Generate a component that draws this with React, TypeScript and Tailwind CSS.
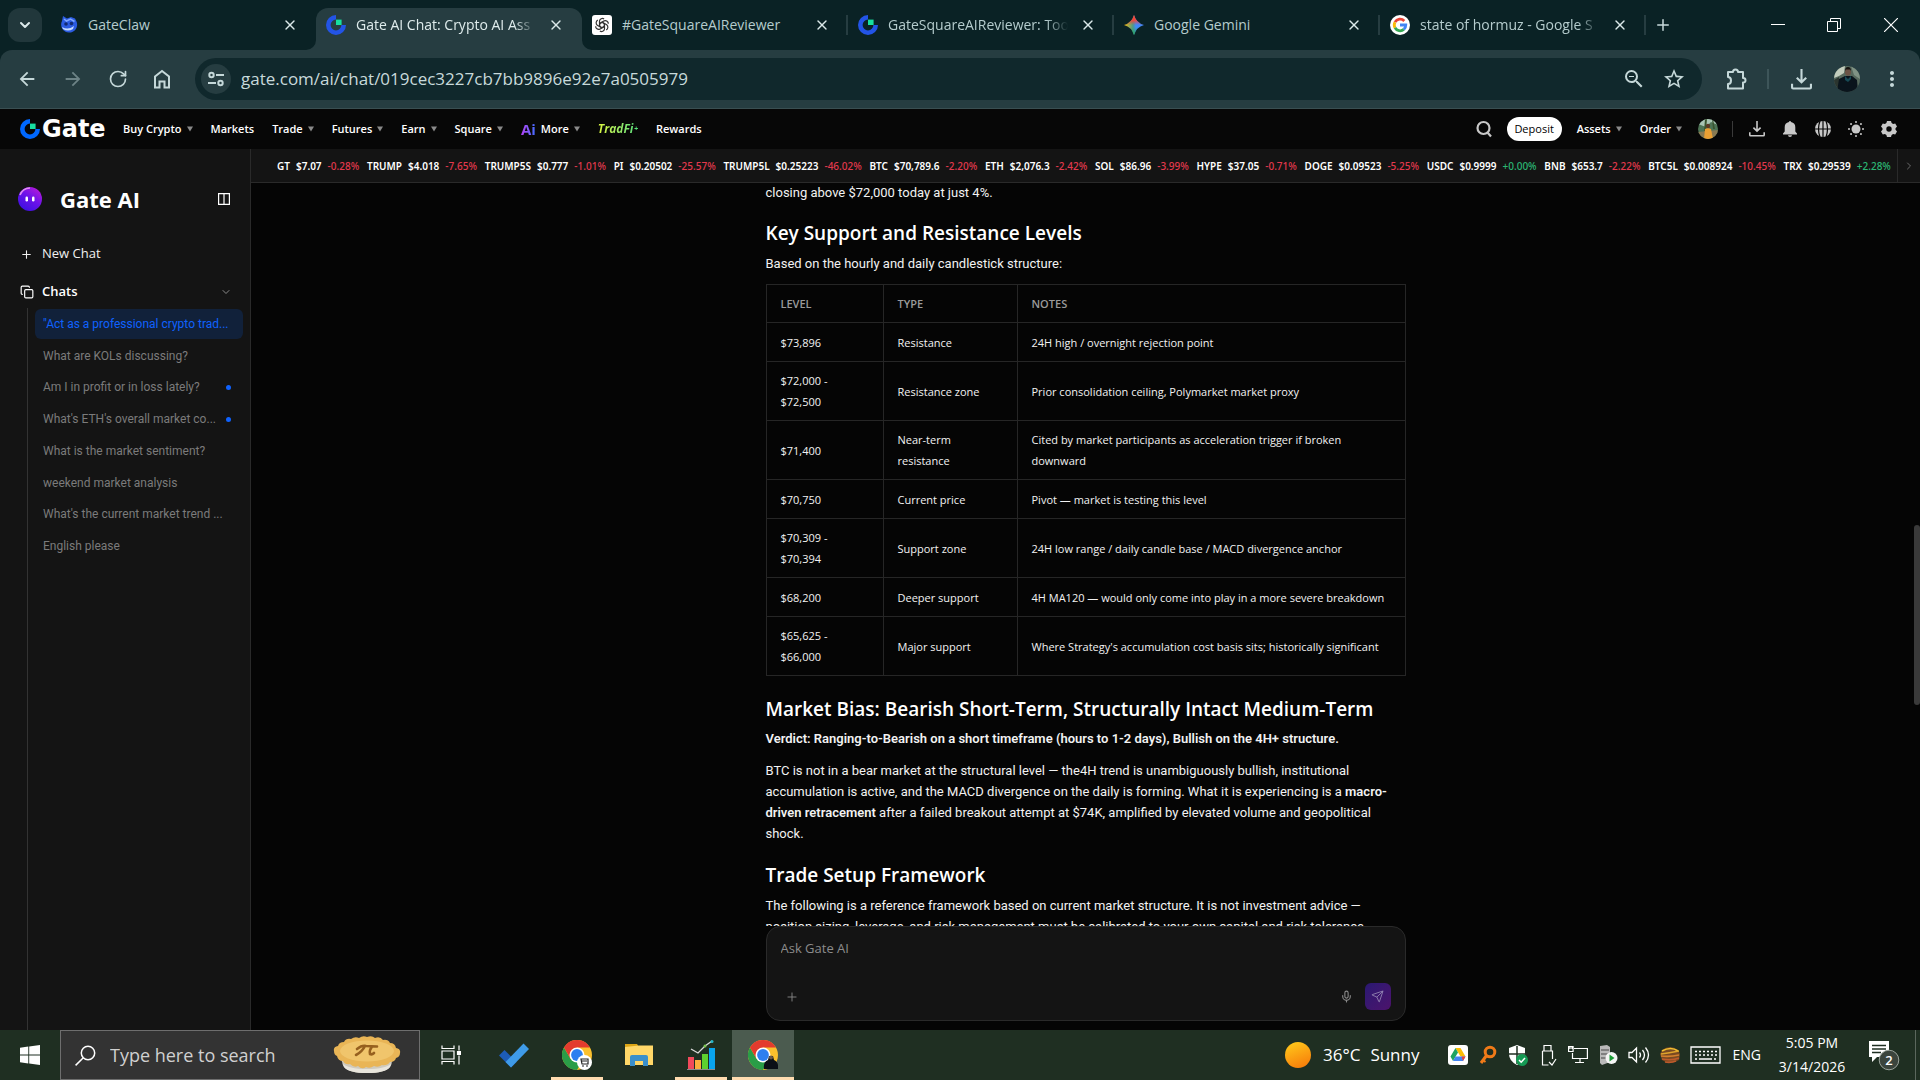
import React from 'react';
import { ChevronDown, ChevronRight, Copy, Mic, Plus, RotateCw, Send, X } from 'lucide-react';
import { MdArrowBack, MdArrowForward, MdMoreVert, MdOutlineZoomOut, MdStarBorder } from 'react-icons/md';

type Coin = { name: string; price: string; change: string };
type Level = { level: string; type: string; notes: string };

const COINS: Coin[] = [
  { name: 'GT', price: '$7.07', change: '-0.28%' },
  { name: 'TRUMP', price: '$4.018', change: '-7.65%' },
  { name: 'TRUMP5S', price: '$0.777', change: '-1.01%' },
  { name: 'PI', price: '$0.20502', change: '-25.57%' },
  { name: 'TRUMP5L', price: '$0.25223', change: '-46.02%' },
  { name: 'BTC', price: '$70,789.6', change: '-2.20%' },
  { name: 'ETH', price: '$2,076.3', change: '-2.42%' },
  { name: 'SOL', price: '$86.96', change: '-3.99%' },
  { name: 'HYPE', price: '$37.05', change: '-0.71%' },
  { name: 'DOGE', price: '$0.09523', change: '-5.25%' },
  { name: 'USDC', price: '$0.9999', change: '+0.00%' },
  { name: 'BNB', price: '$653.7', change: '-2.22%' },
  { name: 'BTC5L', price: '$0.008924', change: '-10.45%' },
  { name: 'TRX', price: '$0.29539', change: '+2.28%' },
];

const CHATS = [
  { title: '"Act as a professional crypto trad...', active: true, unread: false },
  { title: 'What are KOLs discussing?', active: false, unread: false },
  { title: 'Am I in profit or in loss lately?', active: false, unread: true },
  { title: "What's ETH's overall market co...", active: false, unread: true },
  { title: 'What is the market sentiment?', active: false, unread: false },
  { title: 'weekend market analysis', active: false, unread: false },
  { title: "What's the current market trend ...", active: false, unread: false },
  { title: 'English please', active: false, unread: false },
];

const LEVELS: Level[] = [
  { level: '$73,896', type: 'Resistance', notes: '24H high / overnight rejection point' },
  { level: '$72,000 - $72,500', type: 'Resistance zone', notes: 'Prior consolidation ceiling, Polymarket market proxy' },
  { level: '$71,400', type: 'Near-term resistance', notes: 'Cited by market participants as acceleration trigger if broken downward' },
  { level: '$70,750', type: 'Current price', notes: 'Pivot — market is testing this level' },
  { level: '$70,309 - $70,394', type: 'Support zone', notes: '24H low range / daily candle base / MACD divergence anchor' },
  { level: '$68,200', type: 'Deeper support', notes: '4H MA120 — would only come into play in a more severe breakdown' },
  { level: '$65,625 - $66,000', type: 'Major support', notes: "Where Strategy's accumulation cost basis sits; historically significant" },
];

const GateMark = ({ size = 20, blue = '#2354e6' }: { size?: number; blue?: string }) => (
  <svg width={size} height={size} viewBox="0 0 20 20" className="shrink-0">
    <path d="M10 0a10 10 0 1 0 10 10h-4.6A5.4 5.4 0 1 1 10 4.6z" fill={blue} />
    <path d="M10 4.6h5.6V10H10z" fill="#17dfa0" />
  </svg>
);

const ClawIcon = () => (
  <svg width="18" height="18" viewBox="0 0 18 18" className="shrink-0">
    <path d="M3 0l4 2.500 4-1.500 4 1.500 1.500 3A8 8 0 1 1 2 5z" fill="#2b5be0" />
    <path d="M4 3l2.500 2 4-2 4 2.500" stroke="#7ea6ff" fill="none" strokeWidth="1.500" />
    <circle cx="6" cy="8" r="1.800" fill="#122a70" />
    <circle cx="11.500" cy="7.500" r="1.800" fill="#122a70" />
    <path d="M2 11q6 3.500 12-1l-1 3q-5 3-10 0z" fill="#c5dbff" />
  </svg>
);

const OpenAiIcon = () => (
  <svg width="20" height="20" viewBox="0 0 20 20" className="shrink-0">
    <rect width="20" height="20" rx="3" fill="#fff" />
    <g fill="none" stroke="#333" strokeWidth="1.2">
      {[0, 60, 120, 180, 240, 300].map((a) => (
        <path key={a} d="M10 7.3l2.5 1.5v5.2a3 3 0 0 1-4.6 2.1" transform={`rotate(${a} 10 10)`} />
      ))}
    </g>
  </svg>
);

const GEM_PATH = 'M10 0Q12.200 7.800 20 10 12.200 12.200 10 20 7.800 12.200 0 10 7.800 7.800 10 0z';

const GeminiIcon = () => (
  <svg width="20" height="20" viewBox="0 0 20 20" className="shrink-0">
    <defs>
      <linearGradient id="gem" x1="0" y1="0.5" x2="1" y2="0.5">
        <stop offset="0" stopColor="#fbbc05" />
        <stop offset="0.45" stopColor="#4c9a8b" />
        <stop offset="0.6" stopColor="#3f8bfd" />
        <stop offset="1" stopColor="#4285f4" />
      </linearGradient>
      <linearGradient id="gemTop" x1="0.5" y1="0" x2="0.5" y2="1">
        <stop offset="0" stopColor="#f3453a" />
        <stop offset="0.25" stopColor="#f3453a" />
        <stop offset="0.5" stopColor="#f3453a" stopOpacity="0" />
        <stop offset="0.6" stopColor="#25a85a" stopOpacity="0" />
        <stop offset="1" stopColor="#25a85a" />
      </linearGradient>
    </defs>
    <path d={GEM_PATH} fill="url(#gem)" />
    <path d={GEM_PATH} fill="url(#gemTop)" />
  </svg>
);

const GoogleIcon = () => (
  <svg width="20" height="20" viewBox="0 0 20 20" className="shrink-0">
    <circle cx="10" cy="10" r="10" fill="#fff" />
    <g fill="none" strokeWidth="2.8">
      <path d="M14.3 6A5.8 5.8 0 0 0 5 7.2" stroke="#ea4335" />
      <path d="M5 7.2a5.8 5.8 0 0 0 0 5.6" stroke="#fbbc05" />
      <path d="M5 12.8a5.8 5.8 0 0 0 8.8 1.6" stroke="#34a853" />
      <path d="M13.8 14.4A5.8 5.8 0 0 0 15.8 10H10" stroke="#4285f4" />
    </g>
  </svg>
);

const TABS: { title: string; icon: React.ReactNode; active?: boolean; line?: boolean; fade?: boolean }[] = [
  { title: 'GateClaw', icon: <ClawIcon /> },
  { title: 'Gate AI Chat: Crypto AI Ass', icon: <GateMark />, active: true, fade: true },
  { title: '#GateSquareAIReviewer', icon: <OpenAiIcon />, line: true },
  { title: 'GateSquareAIReviewer: Too', icon: <GateMark />, line: true, fade: true },
  { title: 'Google Gemini', icon: <GeminiIcon />, line: true },
  { title: 'state of hormuz - Google S', icon: <GoogleIcon />, line: true, fade: true },
];

const DownloadTray = ({ size }: { size: number }) => (
  <svg width={size} height={size} viewBox="0 0 20 20" fill="none" stroke="currentColor" strokeWidth="2">
    <path d="M10 0v12.500M5.5 8.300L10 12.700l4.5-4.4M1 14v3.500q0 1 1 1h16q1 0 1-1V14" />
  </svg>
);

const TabStrip = () => (
  <div className="flex h-[50px] shrink-0 items-center bg-[#0a2225] pl-2">
    <button aria-label="Search tabs" className="flex h-[34px] w-[34px] shrink-0 items-center justify-center rounded-xl bg-[#21373b] text-[#dbe9ea]">
      <ChevronDown size={16} strokeWidth={3} />
    </button>
    <div className="ml-2 flex min-w-0 flex-1 items-end self-stretch">
      {TABS.map((tab) => (
        <div
          key={tab.title}
          className={`relative flex h-[42px] w-[266px] shrink items-center pb-2 pl-[10px] pr-[18px] ${
            tab.active ? 'rounded-t-xl bg-[#263d41] text-[#dfecec]' : 'text-[#b5cccd]'
          }`}
        >
          {tab.active && (
            <>
              <svg width="10" height="10" className="absolute -left-[10px] bottom-0">
                <path d="M10 0v10H0A10 10 0 0 0 10 0z" fill="#263d41" />
              </svg>
              <svg width="10" height="10" className="absolute -right-[10px] bottom-0">
                <path d="M0 0v10h10A10 10 0 0 1 0 0z" fill="#263d41" />
              </svg>
            </>
          )}
          {tab.icon}
          <span
            className={`ml-[10px] min-w-0 flex-1 overflow-hidden whitespace-nowrap text-sm leading-5 ${
              tab.fade ? '[mask-image:linear-gradient(to_right,#000_88%,transparent)]' : ''
            }`}
          >
            {tab.title}
          </span>
          <button aria-label={`Close ${tab.title}`} className="ml-3 shrink-0 text-[#dbe9ea]">
            <X size={16} strokeWidth={2} />
          </button>
          {tab.line && <span className="absolute right-0 top-[7px] h-5 w-[2px] bg-[#263d41]" />}
        </div>
      ))}
      <button aria-label="New tab" className="mb-4 ml-2 text-[#c8dadb]">
        <Plus size={18} />
      </button>
    </div>
    <div className="flex shrink-0 items-center text-white">
      <button aria-label="Minimize" className="flex h-10 w-14 items-center justify-center">
        <svg width="14" height="14" viewBox="0 0 14 14" stroke="currentColor">
          <path d="M0 6.500h14" />
        </svg>
      </button>
      <button aria-label="Restore" className="flex h-10 w-14 items-center justify-center">
        <svg width="14" height="14" viewBox="0 0 14 14" fill="none" stroke="currentColor">
          <path d="M.5 3.5h10v10H.5zM3.5 3.5v-3h10v10h-3" />
        </svg>
      </button>
      <button aria-label="Close window" className="flex h-10 w-[58px] items-center justify-center">
        <svg width="14" height="14" viewBox="0 0 14 14" stroke="currentColor" strokeWidth="1.2">
          <path d="M0 0l14 14M14 0L0 14" />
        </svg>
      </button>
    </div>
  </div>
);

const Toolbar = () => (
  <div className="bg-[#0a2225]">
    <div className="flex h-[59px] shrink-0 items-center rounded-t-xl border-b border-[#3a4f52] bg-[#263d41] pl-4 pr-4 text-[#c5d8d9]">
      <div className="flex items-center gap-6">
        <button aria-label="Back"><MdArrowBack size={22} /></button>
        <button aria-label="Forward" className="text-[#6d8386]"><MdArrowForward size={22} /></button>
        <button aria-label="Reload"><RotateCw size={20} strokeWidth={2} /></button>
        <button aria-label="Home">
          <svg width="20" height="20" viewBox="0 0 20 20" fill="none" stroke="currentColor" strokeWidth="2">
            <path d="M3 7.500L10 2l7 5.500V18.500h-4.500v-6h-5v6H3z" />
          </svg>
        </button>
      </div>
      <div className="ml-[23px] flex h-[42px] flex-1 items-center rounded-full bg-[#10282c] pl-[6px] pr-4">
        <button aria-label="Site information" className="flex h-[30px] w-[30px] items-center justify-center rounded-full bg-[#263d41]">
          <svg width="16" height="16" viewBox="0 0 16 16" fill="none" stroke="currentColor" strokeWidth="2">
            <circle cx="3.5" cy="4" r="2.2" />
            <path d="M8 4h8M0 12h8" />
            <circle cx="12.5" cy="12" r="2.2" />
          </svg>
        </button>
        <input
          aria-label="Address and search bar"
          defaultValue="gate.com/ai/chat/019cec3227cb7bb9896e92e7a0505979"
          className="ml-[10px] min-w-0 flex-1 bg-transparent text-[17px] text-[#c8dadb] outline-none"
        />
        <button aria-label="Zoom"><MdOutlineZoomOut size={24} /></button>
        <button aria-label="Bookmark" className="ml-4"><MdStarBorder size={24} /></button>
      </div>
      <button aria-label="Extensions" className="ml-6">
        <svg width="21" height="22" viewBox="0 0 21 22" fill="none" stroke="currentColor" strokeWidth="2" strokeLinejoin="round">
          <path d="M2 4h5q0-2.500 2.500-2.500T12 4h5v6q2.500 0 2.500 2.300T17 14.500V20.500H2V16q3 0 3-3.500T2 9z" />
        </svg>
      </button>
      <span className="ml-5 h-5 w-[2px] bg-[#3d5559]" />
      <button aria-label="Downloads" className="ml-[22px]"><DownloadTray size={21} /></button>
      <button aria-label="Profile" className="ml-[22px]">
        <svg width="26" height="26" viewBox="0 0 26 26">
          <defs><clipPath id="pf"><circle cx="13" cy="13" r="13" /></clipPath></defs>
          <g clipPath="url(#pf)">
            <rect width="26" height="26" fill="#56695d" />
            <path d="M0 0h11l-1 7-5 3-5 2z" fill="#c3cdbd" />
            <path d="M17 0h9v13l-6-4z" fill="#7f9284" />
            <path d="M0 14l5-3v15H0z" fill="#2b352f" />
            <path d="M3 26l2-13 6-3h7l5 4 1 12z" fill="#0a141c" />
            <path d="M11 10l3 3 3-3v3l-3 3-3-2z" fill="#174a55" />
            <ellipse cx="14" cy="6" rx="3" ry="3.800" fill="#6b5346" />
            <path d="M11 5q0-4 3-4t3 4l-1-1.500h-4z" fill="#17130f" />
          </g>
        </svg>
      </button>
      <button aria-label="Chrome menu" className="ml-5"><MdMoreVert size={24} /></button>
    </div>
  </div>
);

const Caret = () => (
  <svg width="6" height="6" viewBox="0 0 6 6" className="ml-[5px] fill-[#8a8a8a]">
    <path d="M0 0.5h6L3 5.5z" />
  </svg>
);

const NavLink = ({ label, caret }: { label: string; caret?: boolean }) => (
  <a href="#" className="flex items-center">
    {label}
    {caret && <Caret />}
  </a>
);

const GateHeader = () => (
  <header className="flex h-10 shrink-0 items-center bg-[#070707] pl-5 pr-[23px] text-xs font-semibold text-white">
    <a href="#" aria-label="Gate" className="flex w-[88px] items-center font-['DejaVu_Sans'] text-[24px] font-bold leading-6">
      <GateMark blue="#0068ff" />
      <span className="ml-[2px]">Gate</span>
    </a>
    <nav className="ml-[15px] flex items-center gap-[18px] text-[11px]">
      <NavLink label="Buy Crypto" caret />
      <NavLink label="Markets" />
      <NavLink label="Trade" caret />
      <NavLink label="Futures" caret />
      <NavLink label="Earn" caret />
      <NavLink label="Square" caret />
      <a href="#" className="flex items-center">
        <span className="mr-[5px] bg-gradient-to-r from-[#b23df5] to-[#2f6bff] bg-clip-text text-[15px] font-bold leading-4 text-transparent">Ai</span>
        More
        <Caret />
      </a>
      <a href="#" className="bg-gradient-to-r from-[#d8f53c] to-[#4fe07c] bg-clip-text text-xs font-bold italic text-transparent">TradFi⁺</a>
      <NavLink label="Rewards" />
    </nav>
    <div className="ml-auto flex items-center text-[11px]">
      <button aria-label="Search" className="text-[#c8c8c8]">
        <svg width="16" height="18" viewBox="0 0 16 18" fill="none" stroke="currentColor" strokeWidth="2.2">
          <circle cx="7.500" cy="8" r="6" />
          <path d="M11.500 12.500l3.500 4" />
        </svg>
      </button>
      <button className="ml-[15px] h-6 w-[55px] rounded-full bg-white text-[11px] font-medium text-black">Deposit</button>
      <div className="ml-[15px] flex items-center gap-[18px]">
        <NavLink label="Assets" caret />
        <NavLink label="Order" caret />
      </div>
      <svg width="20" height="20" viewBox="0 0 20 20" className="ml-4">
        <defs><clipPath id="av"><circle cx="10" cy="10" r="10" /></clipPath></defs>
        <g clipPath="url(#av)">
          <rect width="20" height="20" fill="#4d7355" />
          <path d="M0 0h20v6L13 3 8 8 0 5z" fill="#a9c4b4" />
          <path d="M7 0h2l-1 12H6zM14 0h1l2 10h-2z" fill="#39542f" />
          <path d="M0 13l20-2v9H0z" fill="#8a7a52" />
          <path d="M6 20l1-10 3-1 3 1 2 10z" fill="#eba033" />
          <circle cx="10" cy="7" r="2.200" fill="#5a3a25" />
        </g>
      </svg>
      <span className="ml-[14px] h-4 w-px bg-[#3a3a3a]" />
      <div className="ml-4 flex items-center gap-[17px] text-[#c8c8c8]">
        <button aria-label="Download app"><DownloadTray size={16} /></button>
        <button aria-label="Notifications">
          <svg width="16" height="16" viewBox="0 0 16 16" fill="currentColor">
            <path d="M8 0a1 1 0 0 1 1 1A5.300 5.300 0 0 1 13.300 6.300v4.200l1.700 2v1H1v-1l1.700-2V6.300A5.300 5.300 0 0 1 7 1a1 1 0 0 1 1-1zM6 14.300h4a2 1.700 0 0 1-4 0z" />
          </svg>
        </button>
        <button aria-label="Language">
          <svg width="16" height="16" viewBox="0 0 16 16">
            <circle cx="8" cy="8" r="8" fill="currentColor" />
            <path d="M8 0v16M0 8h16M5 0q-3 8 0 16M11 0q3 8 0 16" stroke="#070707" strokeWidth="1.200" fill="none" />
          </svg>
        </button>
        <button aria-label="Theme">
          <svg width="16" height="16" viewBox="0 0 16 16" fill="currentColor">
            <circle cx="8" cy="8" r="4.500" />
            {[0, 45, 90, 135, 180, 225, 270, 315].map((a) => (
              <circle key={a} cx="8" cy="1" r="1" transform={`rotate(${a} 8 8)`} />
            ))}
          </svg>
        </button>
        <button aria-label="Settings">
          <svg width="16" height="16" viewBox="0 0 16 16" fill="currentColor">
            <path fillRule="evenodd" d="M6 0h4l.6 2 1.500.900 2.100-.500 1.800 3.200L14.500 7.200v1.600l1.500 1.600-1.800 3.200-2.100-.500-1.500.900L10 16H6l-.6-2-1.500-.900-2.100.500L0 10.400l1.500-1.600V7.200L0 5.600l1.800-3.200 2.100.500L5.400 2zM8 5.300a2.700 2.700 0 1 0 0 5.400 2.700 2.700 0 0 0 0-5.400z" />
          </svg>
        </button>
      </div>
    </div>
  </header>
);

const Ticker = () => (
  <div className="flex h-[34px] shrink-0 border-b border-[#2a2a2a] bg-[#141414] font-['Noto_Sans',sans-serif]">
    <div className="flex min-w-0 flex-1 items-center justify-between overflow-hidden pl-[26px] pr-[6px] pt-[2px] text-[10px] font-semibold text-white">
      {COINS.map((coin) => (
        <span key={coin.name} className="flex gap-[6px] whitespace-nowrap">
          <span>{coin.name}</span>
          <span>{coin.price}</span>
          <span className={coin.change.startsWith('+') ? 'font-medium text-[#2bb673]' : 'font-medium text-[#e2394d]'}>{coin.change}</span>
        </span>
      ))}
    </div>
    <button aria-label="More coins" className="flex w-[23px] shrink-0 items-center justify-center border-l border-[#2a2a2a] text-[#6a6a6a]">
      <ChevronRight size={12} />
    </button>
  </div>
);

const Sidebar = () => (
  <aside className="flex w-[251px] shrink-0 flex-col border-r border-[#2a2a2a] bg-[#141414]">
    <div className="mt-9 flex h-7 items-center pl-[18px] pr-5">
      <svg width="24" height="24" viewBox="0 0 24 24">
        <defs>
          <linearGradient id="bot" x1="0.9" y1="0" x2="0.2" y2="1">
            <stop offset="0" stopColor="#c01bd8" />
            <stop offset="0.5" stopColor="#6a12ea" />
            <stop offset="1" stopColor="#3a10e0" />
          </linearGradient>
        </defs>
        <circle cx="12" cy="12" r="12" fill="url(#bot)" />
        <path d="M2 8A11 11 0 0 1 12 1" stroke="#e08df2" strokeWidth="1.5" fill="none" />
        <rect x="7.500" y="9.500" width="2.500" height="5" rx="1.200" fill="#fff" />
        <rect x="14" y="9.500" width="2.500" height="5" rx="1.200" fill="#fff" />
      </svg>
      <h1 className="ml-[18px] text-[22px] font-bold leading-7 text-white">Gate AI</h1>
      <button aria-label="Collapse sidebar" className="ml-auto text-white">
        <svg width="12" height="12" viewBox="0 0 12 12" fill="none" stroke="currentColor" strokeWidth="1.200">
          <path d="M.600.600h10.800v10.800H.600zM6 .600v10.800" />
        </svg>
      </button>
    </div>
    <button className="mt-[29px] flex h-6 items-center pl-5 text-[13px] font-medium text-[#f0f0f0]">
      <Plus size={13} strokeWidth={2} className="mr-[9px]" />
      New Chat
    </button>
    <button className="mt-[14px] flex h-6 items-center pl-5 pr-[18px] text-[13px] font-semibold text-white">
      <Copy size={14} strokeWidth={2} className="mr-2" />
      Chats
      <ChevronDown size={12} className="ml-auto text-[#8a8a8a]" />
    </button>
    <div className="ml-[27px] mt-1 flex-1 border-l border-[#333] pl-[7px] pr-[7px] pt-px">
      <ul className="flex h-[252px] flex-col justify-between font-['Roboto',sans-serif]">
        {CHATS.map((chat) => (
          <li key={chat.title}>
            <a
              href="#"
              className={`flex h-[30px] items-center rounded-md pl-2 pr-3 text-xs ${
                chat.active ? 'bg-[#11213a] text-[#0f62fe]' : 'text-[#7b7b7b]'
              }`}
            >
              <span className="whitespace-nowrap">{chat.title}</span>
              {chat.unread && <span className="ml-auto h-[5px] w-[5px] shrink-0 rounded-full bg-[#0f62fe]" />}
            </a>
          </li>
        ))}
      </ul>
    </div>
  </aside>
);

const Heading = ({ className, children }: { className: string; children: React.ReactNode }) => (
  <h2 className={`font-['Open_Sans',sans-serif] text-[19px] font-semibold leading-7 text-white ${className}`}>{children}</h2>
);

const Answer = () => (
  <article className="mx-auto -mt-px w-full max-w-[640px] font-['Roboto',sans-serif] text-[13px] leading-[21px] text-[#f2f2f2]">
    <p>closing above $72,000 today at just 4%.</p>
    <Heading className="mt-4">Key Support and Resistance Levels</Heading>
    <p className="mt-[6px]">Based on the hourly and daily candlestick structure:</p>
    <table className="mt-[10px] w-full table-fixed border-collapse font-['Open_Sans',sans-serif] text-[11px] leading-[21px]">
      <colgroup>
        <col className="w-[117px]" />
        <col className="w-[134px]" />
        <col />
      </colgroup>
      <thead>
        <tr className="h-[38px]">
          {['LEVEL', 'TYPE', 'NOTES'].map((h) => (
            <th key={h} className="border border-[#262626] px-[14px] py-2 text-left font-semibold text-[#9a9a9a]">{h}</th>
          ))}
        </tr>
      </thead>
      <tbody>
        {LEVELS.map((row) => (
          <tr key={row.level} className="h-[39px]">
            <td className="border border-[#262626] px-[14px] py-2">{row.level}</td>
            <td className="border border-[#262626] px-[14px] py-2">{row.type}</td>
            <td className="border border-[#262626] px-[14px] py-2">{row.notes}</td>
          </tr>
        ))}
      </tbody>
    </table>
    <Heading className="mt-[19px]">Market Bias: Bearish Short-Term, Structurally Intact Medium-Term</Heading>
    <p className="mt-[5px] font-semibold">Verdict: Ranging-to-Bearish on a short timeframe (hours to 1-2 days), Bullish on the 4H+ structure.</p>
    <p className="mt-[11px]">
      BTC is not in a bear market at the structural level — the4H trend is unambiguously bullish, institutional
      accumulation is active, and the MACD divergence on the daily is forming. What it is experiencing is a{' '}
      <strong className="font-semibold">macro-driven retracement</strong> after a failed breakout attempt at $74K,
      amplified by elevated volume and geopolitical shock.
    </p>
    <Heading className="mt-[17px]">Trade Setup Framework</Heading>
    <p className="mt-[6px]">
      The following is a reference framework based on current market structure. It is not investment advice —
      position sizing, leverage, and risk management must be calibrated to your own capital and risk tolerance.
    </p>
  </article>
);

const Composer = () => (
  <form className="mx-auto mb-[9px] flex h-[95px] w-full max-w-[640px] shrink-0 flex-col rounded-[14px] border border-[#2a2a2a] bg-[#141414] px-[14px] pb-[10px] pt-[11px]">
    <textarea
      aria-label="Ask Gate AI"
      placeholder="Ask Gate AI"
      className="w-full flex-1 resize-none bg-transparent text-[13px] leading-5 text-white outline-none placeholder:text-[#8c8c8c]"
    />
    <div className="flex items-center text-[#8c8c8c]">
      <button type="button" aria-label="Attach" className="ml-1"><Plus size={14} strokeWidth={1.5} /></button>
      <button type="button" aria-label="Voice input" className="ml-auto"><Mic size={13} /></button>
      <button
        type="button"
        aria-label="Send"
        className="ml-3 flex h-[27px] w-[26px] items-center justify-center rounded-md bg-gradient-to-br from-[#2a1872] to-[#4c126c] text-[#9a8cb8]"
      >
        <Send size={13} strokeWidth={1.5} />
      </button>
    </div>
  </form>
);

const ChromeIcon = ({ children }: { children: React.ReactNode }) => (
  <svg width="30" height="30" viewBox="0 0 30 30">
    <circle cx="15" cy="15" r="15" fill="#fbc02d" />
    <path d="M2 7.500A15 15 0 0 0 15 30l6.500-11.300H8.500z" fill="#2a9d47" />
    <path d="M2 7.500L8.500 18.700 15 15V7.500H28A15 15 0 0 0 2 7.500z" fill="#e33b2e" />
    <circle cx="15" cy="15" r="7.500" fill="#fff" />
    <circle cx="15" cy="15" r="5.900" fill="#2d7ff0" />
    {children}
  </svg>
);

const PieIcon = () => (
  <svg width="68" height="38" viewBox="0 0 68 38">
    <path d="M6 18l5 13q5 6 23 6t23-6l5-13z" fill="#cfcabd" />
    <path d="M9 27q6 6 25 6t25-6l-2 4q-5 6-23 6t-23-6z" fill="#e8e5dc" />
    <path d="M1 15q-1-4 4-5 1-4 6-4 2-4 7-3 4-3 8-1 4-3 8-1 5-2 8 1 5-2 8 2 5-1 7 3 5 0 6 5 5 1 4 5 0 4-4 5-1 4-6 4-3 4-8 3-4 3-8 1-4 3-8 1-4 3-8-1-4 2-8-2-5 1-7-3-5 0-6-5-3-1-3-5z" fill="#e9b556" />
    <ellipse cx="34" cy="15" rx="27" ry="10.500" fill="#f0c56c" />
    <path d="M24 13q5-4 9-3l11 .500M32 10q-3 6-9 9M39 10.500q-3 4-2 7.500 2 1 4-1" stroke="#96601f" strokeWidth="2.600" fill="none" strokeLinecap="round" />
  </svg>
);

type TaskAppProps = { label: string; width?: string; running?: boolean; active?: boolean; children: React.ReactNode };

const TaskApp = ({ label, width = 'w-[62px]', running, active, children }: TaskAppProps) => (
  <button
    aria-label={label}
    className={`relative flex h-full items-center justify-center ${width} ${active ? 'bg-[#4b5b4f]' : ''}`}
  >
    {children}
    {running && <span className={`absolute bottom-0 h-[3px] bg-[#ffdcb0] ${active ? 'inset-x-0' : 'inset-x-[5px]'}`} />}
  </button>
);

const TrayIcons = () => (
  <div className="flex items-center gap-[10px] text-white">
    <svg width="20" height="20" viewBox="0 0 20 20">
      <rect width="20" height="20" rx="3" fill="#fff" />
      <path d="M7.500 3h5l5 8.500h-5z" fill="#fbbc04" />
      <path d="M7.500 3L2.500 11.500l2.500 4.500 5-8.500z" fill="#1ea362" />
      <path d="M7.500 11.500h10L15 16H5z" fill="#4285f4" />
      <path d="M15 16l2.500-4.500h-4z" fill="#ea4335" />
    </svg>
    <svg width="20" height="20" viewBox="0 0 20 20" fill="none" stroke="#f07a18" strokeWidth="3">
      <circle cx="12" cy="7" r="4.800" />
      <path d="M8.500 10.500L3 18" />
      <path d="M5 15l2.500 2" strokeWidth="2" />
    </svg>
    <svg width="20" height="22" viewBox="0 0 20 22">
      <path d="M9 1l8 3v6q0 7-8 11Q1 17 1 10V4z" fill="#fff" />
      <path d="M9 2v18M1 10h16" stroke="#1f2f22" strokeWidth="1.500" />
      <circle cx="14" cy="16" r="6" fill="#159a54" />
      <path d="M11 16l2.200 2.200L17 14" stroke="#fff" strokeWidth="1.500" fill="none" />
    </svg>
    <svg width="20" height="22" viewBox="0 0 20 22" fill="none" stroke="currentColor" strokeWidth="1.200">
      <path d="M6 7V1.500h7V7M4.500 7h10v8M4.500 7v14h6M8 4h0M11 4h0M11 18l3 3 4-6" />
    </svg>
    <svg width="20" height="20" viewBox="0 0 20 20" fill="none" stroke="currentColor" strokeWidth="1.200">
      <path d="M6 3.500h13.400v10H4.500V8M12 13.500v4M7 17.500h9M.600 1.500h4.500v5H.600zM2 1.500V4M4 1.500V4" />
    </svg>
    <svg width="20" height="22" viewBox="0 0 20 22">
      <path d="M2 2l7-1 3 2v15l-8 3-2-2z" fill="#b9b9b9" />
      <path d="M3 6h8M3 10h8M3 14h8" stroke="#6d6d6d" strokeWidth="1.500" />
      <circle cx="13.500" cy="14" r="6" fill="#f5f5f5" />
      <path d="M11.500 10.500l5 3.500-5 3.500z" fill="#1a9b35" />
    </svg>
    <svg width="22" height="20" viewBox="0 0 22 20" fill="none" stroke="currentColor" strokeWidth="1.300">
      <path d="M1 7.500h3l4.500-4.500v14L4 12.500H1zM11.500 7.500q2 2.500 0 5M14.500 5q4 5 0 10M17.500 2.500q6 7.500 0 15" />
    </svg>
    <svg width="20" height="18" viewBox="0 0 20 18">
      <path d="M2 4q8-6 16 0l2 4-1 6q-9 6-17 0L0 8z" fill="#7a4a22" />
      <g fill="none" strokeWidth="1.600">
        <path d="M2 5q9-5 16 0" stroke="#f0c032" />
        <path d="M1 8q8-1 18-3" stroke="#e0a52c" />
        <path d="M1 10q9 1 18-1" stroke="#d5802d" />
        <path d="M2 13q9 2 17-1M5 16q6 1 11-1" stroke="#bd5a2b" />
      </g>
    </svg>
    <svg width="31" height="20" viewBox="0 0 31 20" fill="none" stroke="currentColor">
      <path d="M1 2h29v16H1z" strokeWidth="1.300" />
      <path d="M5 6.500h22M5 10h22" strokeWidth="1.500" strokeDasharray="2 2" />
      <path d="M5 14h2M9 14h13M24 14h2" strokeWidth="1.500" />
    </svg>
  </div>
);

const Taskbar = () => (
  <footer className="flex h-[50px] shrink-0 items-center bg-[#1f2f22] text-white">
    <button aria-label="Start" className="flex h-full w-[60px] items-center justify-center">
      <svg width="20" height="20" viewBox="0 0 20 20" fill="#fff">
        <path d="M0 2.800l8.300-1.200v8H0zM9.200 1.500L20 0v9.600H9.200zM0 10.400h8.300v8L0 17.200zM9.200 10.400H20V20L9.200 18.500z" />
      </svg>
    </button>
    <label className="flex h-full w-[360px] items-center border border-[#6e6e6e] bg-[#333333] pl-[14px] pr-[18px]">
      <svg width="21" height="21" viewBox="0 0 21 21" fill="none" stroke="#fff" strokeWidth="1.500">
        <circle cx="13" cy="8" r="6.700" />
        <path d="M8.300 12.700L.600 20.400" />
      </svg>
      <input
        aria-label="Type here to search"
        placeholder="Type here to search"
        className="ml-[14px] min-w-0 flex-1 bg-transparent text-[18px] outline-none placeholder:text-[#d0d0d0]"
      />
      <PieIcon />
    </label>
    <TaskApp label="Task view">
      <svg width="20" height="20" viewBox="0 0 20 20" fill="none" stroke="#fff" strokeWidth="1.200">
        <path d="M1 .5v3h12v-3M1 6h12v8H1zM1 19.500v-3h12v3M18 .5v5M18 10.500v9" />
        <path d="M16.500 6.500h3v3h-3z" fill="#fff" />
      </svg>
    </TaskApp>
    <TaskApp label="To Do" width="w-16">
      <svg width="30" height="25" viewBox="0 0 30 25">
        <path d="M0 12.500L5.500 7l12 12-5.500 5.500z" fill="#1d5cb8" />
        <path d="M6.500 19L24.500 .500 30 6 12 24.500z" fill="#3f9be8" />
      </svg>
    </TaskApp>
    <TaskApp label="Google Chrome" running>
      <ChromeIcon>
        <circle cx="22.500" cy="22.500" r="7.500" fill="#fff" />
        <path d="M19 19h7v5h-6zM20 26h2M24 26h2M20 21h5" stroke="#222" fill="none" strokeWidth="1.200" />
      </ChromeIcon>
    </TaskApp>
    <TaskApp label="File Explorer">
      <svg width="28" height="24" viewBox="0 0 28 24">
        <path d="M0 1h12l2 3H0z" fill="#dca516" />
        <path d="M0 4l14-1.500h14V22H0z" fill="#ffd768" />
        <path d="M5 23v-9q0-2 2-2h14q2 0 2 2v9h-5v-5h-8v5z" fill="#3a8fcb" />
      </svg>
    </TaskApp>
    <TaskApp label="Charts" running>
      <svg width="28" height="30" viewBox="0 0 28 30">
        <path d="M1 17h6v12H1z" fill="#f1495b" />
        <path d="M8 20h6v9H8z" fill="#fdae3c" />
        <path d="M15 14h6v15h-6z" fill="#5ed12f" />
        <path d="M22 8h6v21h-6z" fill="#09a4ee" />
        <path d="M4 9l7 4 7-7 7-5" stroke="#d9d9d9" strokeWidth="1.300" fill="none" />
        <circle cx="18" cy="6" r="1.500" fill="#7ec850" />
        <circle cx="25" cy="1.500" r="1.500" fill="#29b6c9" />
        <path d="M0 29.500h28" stroke="#8b8b8b" />
      </svg>
    </TaskApp>
    <TaskApp label="Google Chrome, Gate AI" running active>
      <ChromeIcon>
        <path d="M16 29q-1-7 4-9l1-4h4l1 4q5 2 4 9z" fill="#0b1016" />
        <circle cx="23" cy="17.500" r="2" fill="#6a5a4a" />
      </ChromeIcon>
    </TaskApp>
    <button className="ml-auto flex items-center text-[17px]">
      <svg width="26" height="26" viewBox="0 0 26 26">
        <defs>
          <linearGradient id="sun" x1="0.3" y1="0" x2="0.7" y2="1">
            <stop offset="0" stopColor="#ffc61a" />
            <stop offset="1" stopColor="#f77c0a" />
          </linearGradient>
        </defs>
        <circle cx="13" cy="13" r="13" fill="url(#sun)" />
      </svg>
      <span className="ml-3">36°C</span>
      <span className="ml-[10px]">Sunny</span>
    </button>
    <div className="ml-7"><TrayIcons /></div>
    <span className="ml-3 text-sm">ENG</span>
    <div className="ml-4 w-[70px] text-center text-[14px] leading-6">
      <div className="whitespace-nowrap">5:05 PM</div>
      <div className="whitespace-nowrap">3/14/2026</div>
    </div>
    <button aria-label="2 new notifications" className="relative ml-5 mr-[14px]">
      <svg width="34" height="32" viewBox="0 0 34 32">
        <path d="M2 2h20v16H10l-5 5v-5H2z" fill="#fff" />
        <path d="M5 6.500h14M5 10h14M5 13.500h9" stroke="#1f2f22" strokeWidth="1.500" />
        <circle cx="22" cy="21" r="9.800" fill="#3b453d" stroke="#9aa39b" />
      </svg>
      <span className="absolute left-[17px] top-3 w-[10px] text-center text-[13px] font-semibold leading-[18px]">2</span>
    </button>
    <span className="mr-1 h-full w-px bg-[#5b675d]" />
  </footer>
);

export default function App() {
  return (
    <div className="flex h-screen flex-col overflow-hidden bg-[#050505] font-['Open_Sans','Noto_Sans',sans-serif]">
      <TabStrip />
      <Toolbar />
      <GateHeader />
      <div className="relative flex min-h-0 flex-1">
        <Sidebar />
        <main className="flex min-w-0 flex-1 flex-col">
          <Ticker />
          <div className="min-h-0 flex-1 overflow-hidden">
            <Answer />
          </div>
          <Composer />
        </main>
        <div className="absolute right-0 top-[376px] h-[180px] w-[6px] rounded-full bg-[#3a3a3a]" />
      </div>
      <Taskbar />
    </div>
  );
}
